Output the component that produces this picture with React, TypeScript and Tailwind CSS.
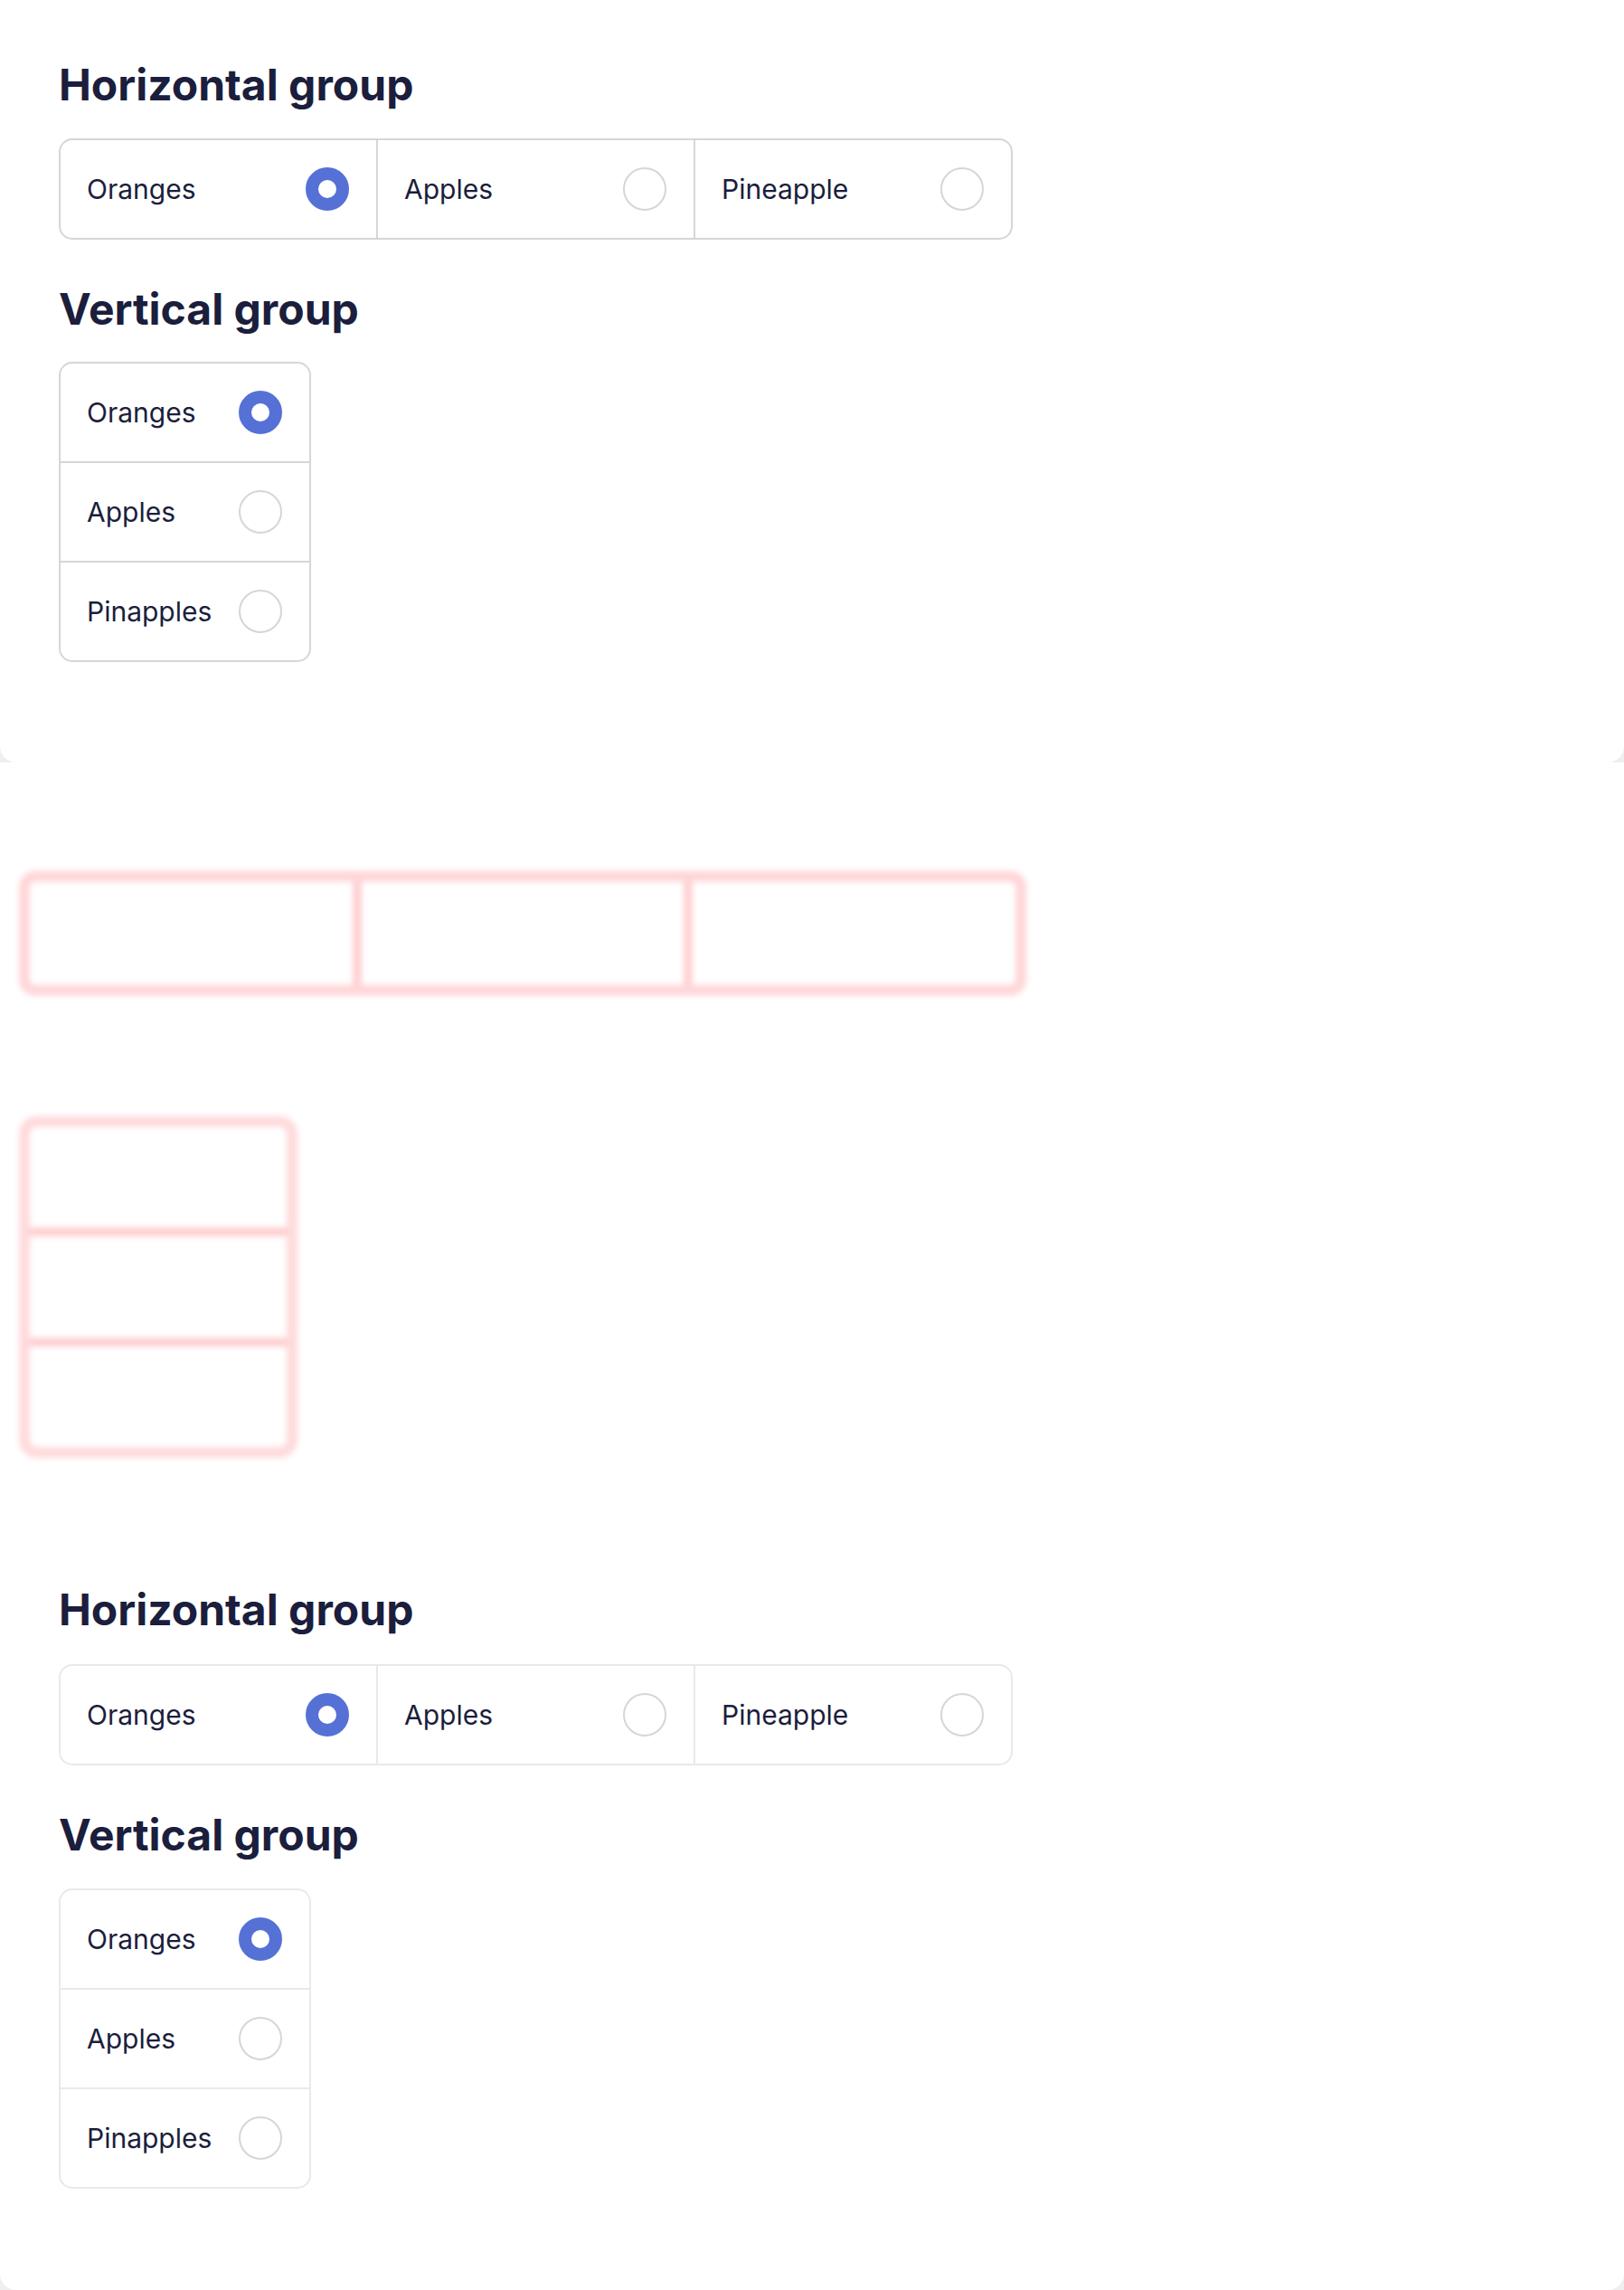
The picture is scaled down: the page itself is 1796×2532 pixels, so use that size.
import React from "react";

type Option = { label: string; checked?: boolean };

const horizontal: Option[] = [
  { label: "Oranges", checked: true },
  { label: "Apples" },
  { label: "Pineapple" },
];

const vertical: Option[] = [
  { label: "Oranges", checked: true },
  { label: "Apples" },
  { label: "Pinapples" },
];

function Radio({ checked }: { checked?: boolean }) {
  return checked ? (
    <span className="block h-12 w-12 shrink-0 rounded-full border-[14px] border-[#5571d6] bg-white" />
  ) : (
    <span className="block h-12 w-12 shrink-0 rounded-full border-2 border-[#d6d6d6] bg-white" />
  );
}

function Heading({ children, className }: { children: React.ReactNode; className?: string }) {
  return (
    <h2 className={"text-[48px] font-bold leading-[58px] text-[#1b1e3c] " + (className ?? "")}>
      {children}
    </h2>
  );
}

function HorizontalGroup({ soft }: { soft?: boolean }) {
  const line = soft ? "border-[#e9e9e9]" : "border-[#d6d6d6]";
  return (
    <div className={"flex w-[1055px] rounded-[15px] border-2 " + line}>
      {horizontal.map((o, i) => (
        <label
          key={o.label}
          className={
            "flex flex-1 items-center justify-between py-[30px] pl-[29px] pr-[30px] " +
            (i > 0 ? "border-l-2 " + line : "")
          }
        >
          <span className="text-[30px] text-[#1b1e3c]">{o.label}</span>
          <Radio checked={o.checked} />
        </label>
      ))}
    </div>
  );
}

function VerticalGroup({ soft }: { soft?: boolean }) {
  const line = soft ? "border-[#e9e9e9]" : "border-[#d6d6d6]";
  return (
    <div className={"flex w-[279px] flex-col rounded-[15px] border-2 " + line}>
      {vertical.map((o, i) => (
        <label
          key={o.label}
          className={
            "flex items-center justify-between py-[30px] pl-[29px] pr-[30px] " +
            (i > 0 ? "border-t-2 " + line : "")
          }
        >
          <span className="text-[30px] text-[#1b1e3c]">{o.label}</span>
          <Radio checked={o.checked} />
        </label>
      ))}
    </div>
  );
}

export default function App() {
  return (
    <div className="min-h-screen bg-[#efefef] font-['Inter',sans-serif]">
      {/* Live demo */}
      <section className="h-[843px] rounded-b-[18px] bg-white pl-[65px] pt-[65px]">
        <Heading>Horizontal group</Heading>
        <div className="mt-[30px]">
          <HorizontalGroup />
        </div>
        <Heading className="mt-[48px]">Vertical group</Heading>
        <div className="mt-[29px]">
          <VerticalGroup />
        </div>
      </section>

      {/* Skeleton + rendered copy */}
      <section className="h-[1689px] rounded-b-[18px] bg-white">
        <div className="pl-[21px] pt-[120px]">
          <div className="flex h-[138px] w-[1114px] rounded-[18px] border-[12px] border-[#ffd6d8] blur-[3px]">
            <div className="flex-1" />
            <div className="flex-1 border-l-[10px] border-[#ffd0d2]" />
            <div className="flex-1 border-l-[10px] border-[#ffd0d2]" />
          </div>
          <div className="mt-[133px] flex h-[378px] w-[308px] flex-col rounded-[20px] border-[12px] border-[#ffdadc] blur-[3px]">
            <div className="flex-1" />
            <div className="flex-1 border-t-[10px] border-[#ffcfd1]" />
            <div className="flex-1 border-t-[10px] border-[#ffcfd1]" />
          </div>
        </div>

        <div className="pl-[65px] pt-[139px]">
          <Heading>Horizontal group</Heading>
          <div className="mt-[31px]">
            <HorizontalGroup soft />
          </div>
          <Heading className="mt-[48px]">Vertical group</Heading>
          <div className="mt-[30px]">
            <VerticalGroup soft />
          </div>
        </div>
      </section>
    </div>
  );
}
